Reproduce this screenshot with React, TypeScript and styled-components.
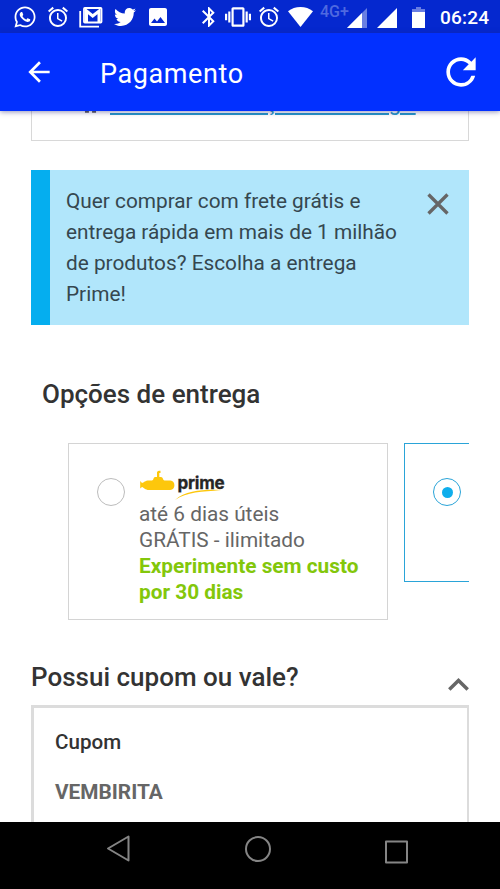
import React from "react";
import styled, { createGlobalStyle } from "styled-components";
import { FaTwitter, FaWhatsapp } from "react-icons/fa";
import { MdAlarm, MdArrowBack, MdBluetooth, MdHome, MdImage, MdRefresh, MdVibration } from "react-icons/md";

const GlobalStyle = createGlobalStyle`
  * { box-sizing: border-box; }
  body { margin: 0; background: #fff; font-family: Roboto, "Liberation Sans", sans-serif; }
  svg { display: block; flex: none; }
  h1, h2, p { margin: 0; font-weight: 400; }
`;

const Phone = styled.div`
  width: 500px;
  height: 889px;
  display: flex;
  flex-direction: column;
  overflow: hidden;
  background: #fff;
`;

const StatusBar = styled.div`
  height: 33px;
  flex: none;
  display: flex;
  align-items: center;
  color: #fff;
  background: #0528cf;
`;

const StatusItem = styled.span<{ $gap: number; $drop?: number }>`
  display: block;
  flex: none;
  margin-left: ${(p) => p.$gap}px;
  margin-top: ${(p) => p.$drop ?? 0}px;
`;

const Network = styled.span`
  align-self: flex-start;
  width: 30px;
  margin-left: 7px;
  margin-top: 4px;
  font-size: 16px;
  font-weight: 500;
  line-height: 16px;
  white-space: nowrap;
  color: #4f69e0;
`;

const Clock = styled.span`
  margin-left: 15px;
  margin-top: 2px;
  font-size: 19px;
  font-weight: 500;
  line-height: 24px;
  letter-spacing: 0.2px;
`;

const AppBar = styled.header`
  height: 78px;
  flex: none;
  display: flex;
  align-items: center;
  padding: 0 17px 0 23px;
  color: #fff;
  background: #0230ff;
  box-shadow: 0 1px 5px rgba(40, 40, 120, 0.5);
  z-index: 1;
`;

const IconButton = styled.button`
  display: block;
  padding: 0;
  border: 0;
  background: none;
  color: inherit;
`;

const PageTitle = styled.h1`
  flex: 1;
  margin-left: 45px;
  padding-top: 3px;
  font-size: 27px;
  line-height: 32px;
  letter-spacing: 0.6px;
`;

const Content = styled.main`
  height: 711px;
  flex: none;
  overflow: hidden;
  padding: 0 31px;
`;

const AddressCard = styled.section`
  height: 70px;
  margin-top: -40px;
  padding: 19px 0 0 49px;
  display: flex;
  align-items: flex-start;
  gap: 10px;
  border: 1px solid #d8d8d8;
  color: #555;
`;

const AddressIcon = styled.span`
  margin-top: 6px;
`;

const AddressLink = styled.a`
  font-size: 22px;
  line-height: 24px;
  letter-spacing: 1.3px;
  white-space: nowrap;
  color: #2596c9;
  text-decoration: underline;
  text-decoration-thickness: 2px;
  text-underline-offset: 3px;
`;

const Banner = styled.section`
  display: flex;
  justify-content: space-between;
  align-items: flex-start;
  height: 155px;
  margin-top: 29px;
  padding: 16px 20px 0 16px;
  border-left: 19px solid #05aeef;
  background: #b1e6fb;
  color: #666;
`;

const BannerText = styled.p`
  width: 345px;
  flex: none;
  font-size: 20.8px;
  line-height: 31px;
  color: #35474f;
`;

const CloseButton = styled(IconButton)`
  margin-top: 7px;
`;

const SectionTitle = styled.h2`
  font-size: 26px;
  font-weight: 500;
  line-height: 32px;
  white-space: nowrap;
  color: #333;
`;

const DeliveryTitle = styled(SectionTitle)`
  margin: 53px 0 0 11px;
`;

const Carousel = styled.div`
  display: flex;
  align-items: flex-start;
  gap: 16px;
  height: 177px;
  margin-top: 33px;
  padding-left: 37px;
  overflow: hidden;
`;

const Option = styled.label<{ $selected?: boolean }>`
  display: flex;
  align-items: flex-start;
  flex: none;
  width: 320px;
  height: ${(p) => (p.$selected ? 139 : 177)}px;
  padding: 26px 10px 0 28px;
  border: ${(p) => (p.$selected ? "1.5px solid #2aa4d8" : "1px solid #d4d4d4")};
`;

const Radio = styled.span<{ $selected?: boolean }>`
  display: grid;
  place-items: center;
  flex: none;
  width: 28px;
  height: 28px;
  margin-top: 8px;
  border: 1px solid ${(p) => (p.$selected ? "#2aa4d8" : "#bcbcbc")};
  border-radius: 50%;

  &::after {
    content: "";
    width: 11px;
    height: 11px;
    border-radius: 50%;
    background: ${(p) => (p.$selected ? "#0faeec" : "transparent")};
  }
`;

const OptionBody = styled.div`
  margin-left: 14px;
  font-size: 20.8px;
  line-height: 26px;
  white-space: nowrap;
  color: #666;
`;

const Promo = styled.p`
  font-weight: 700;
  color: #83c70b;
`;

const CouponHeader = styled.div`
  display: flex;
  justify-content: space-between;
  height: 44px;
  margin-top: 41px;
  color: #666;
`;

const Chevron = styled.span`
  margin-top: 17px;
`;

const CouponCard = styled.section`
  height: 160px;
  padding: 22px 21px;
  border: 3px solid #dcdcdc;
  border-right-width: 2px;
`;

const CouponLabel = styled.p`
  font-size: 20.6px;
  font-weight: 500;
  line-height: 24px;
  color: #333;
`;

const CouponCode = styled.p`
  margin-top: 26px;
  font-size: 20.8px;
  font-weight: 700;
  line-height: 24px;
  color: #666;
`;

const NavBar = styled.nav`
  height: 67px;
  flex: none;
  display: flex;
  align-items: flex-start;
  justify-content: space-between;
  padding: 12px 91px 0 106px;
  color: #858585;
  background: #000;
`;

const NavHome = styled(IconButton)`
  margin-top: -1px;
`;

const NavSquare = styled(IconButton)`
  margin-top: 4px;
`;

const GmailIcon = () => (
  <svg width="24" height="22" viewBox="0 0 24 22" fill="none" stroke="#fff">
    <path d="M1.200 5v15.600H20" strokeWidth="1.800" />
    <rect x="5" y="2" width="17.500" height="14.500" rx="0.800" strokeWidth="1.800" />
    <path d="M7.500 16.500V5l6.200 5L20 5v11.500" strokeWidth="3" />
  </svg>
);

const WifiIcon = () => (
  <svg width="25" height="20" viewBox="0 0 25 20" fill="currentColor">
    <path d="M12.500 20 0 4.200C3.500 1.500 7.800 0 12.500 0s9 1.500 12.500 4.200z" />
  </svg>
);

const SignalIcon = ({ weak = false }: { weak?: boolean }) => (
  <svg width="20" height="20" viewBox="0 0 20 20" fill="currentColor">
    <path d="M0 20 20 0v20z" opacity={weak ? 0.4 : 1} />
    {weak && <path d="M0 20 15 5v15z" />}
  </svg>
);

const BatteryIcon = () => (
  <svg width="13" height="21" viewBox="0 0 13 21" fill="currentColor">
    <path d="M4 0h5v2h4v3H0V2h4z" opacity=".4" />
    <path d="M0 5h13v16H0z" />
  </svg>
);

const LogoText = styled.text`
  font-family: Inter, Roboto, sans-serif;
  font-size: 17px;
  font-weight: 700;
  letter-spacing: -0.2px;
  fill: #252525;
  stroke: #252525;
  stroke-width: 0.3px;
`;

const PrimeLogo = () => (
  <svg width="100" height="31" viewBox="0 0 100 31">
    <g fill="#fdc70c">
      <path d="M10 10.500h3c1.500 0 1.500-3.500 3-3.500h2V2.500C18 1.300 19 .700 21.500 .700v2.300h-1.200V7H22c2 0 2 3.500 3.500 3.500h5.800a4.800 4.800 0 0 1 0 9.500H10C6 20 5 17.500 3 17l-1.800 1.500v-7.500L3 13c2-.5 3-2.500 7-2.500z" />
      <path d="M36 30C48 21.500 63 22 82 20 65 19.500 47 20 36 30z" />
    </g>
    <LogoText x="38.5" y="19">prime</LogoText>
  </svg>
);

export default function App() {
  return (
    <>
      <GlobalStyle />
      <Phone>
        <StatusBar>
          <StatusItem $gap={13}><FaWhatsapp size={24} /></StatusItem>
          <StatusItem $gap={9}><MdAlarm size={24} /></StatusItem>
          <StatusItem $gap={9}><GmailIcon /></StatusItem>
          <StatusItem $gap={11}><FaTwitter size={22} /></StatusItem>
          <StatusItem $gap={10} $drop={1}><MdImage size={24} /></StatusItem>
          <StatusItem $gap={27} $drop={1}><MdBluetooth size={24} /></StatusItem>
          <StatusItem $gap={4}><MdVibration size={26} /></StatusItem>
          <StatusItem $gap={6}><MdAlarm size={24} /></StatusItem>
          <StatusItem $gap={7}><WifiIcon /></StatusItem>
          <Network>4G+</Network>
          <StatusItem $gap={-3} $drop={2}><SignalIcon weak /></StatusItem>
          <StatusItem $gap={10} $drop={2}><SignalIcon /></StatusItem>
          <StatusItem $gap={15} $drop={1}><BatteryIcon /></StatusItem>
          <Clock>06:24</Clock>
        </StatusBar>
        <AppBar>
          <IconButton aria-label="Voltar"><MdArrowBack size={32} /></IconButton>
          <PageTitle>Pagamento</PageTitle>
          <IconButton aria-label="Atualizar"><MdRefresh size={44} /></IconButton>
        </AppBar>
        <Content>
          <AddressCard>
            <AddressIcon><MdHome size={19} /></AddressIcon>
            <AddressLink>Alterar endereço de entrega</AddressLink>
          </AddressCard>
          <Banner>
            <BannerText>Quer comprar com frete grátis e entrega rápida em mais de 1 milhão de produtos? Escolha a entrega Prime!</BannerText>
            <CloseButton aria-label="Fechar">
              <svg width="22" height="22" viewBox="0 0 22 22" stroke="currentColor" strokeWidth="3.300">
                <path d="m1.500 1.500 19 19m0-19-19 19" />
              </svg>
            </CloseButton>
          </Banner>
          <DeliveryTitle>Opções de entrega</DeliveryTitle>
          <Carousel>
            <Option>
              <Radio />
              <OptionBody>
                <PrimeLogo />
                <p>até 6 dias úteis</p>
                <p>GRÁTIS - ilimitado</p>
                <Promo>Experimente sem custo<br />por 30 dias</Promo>
              </OptionBody>
            </Option>
            <Option $selected>
              <Radio $selected />
            </Option>
          </Carousel>
          <CouponHeader>
            <SectionTitle>Possui cupom ou vale?</SectionTitle>
            <Chevron>
              <svg width="21" height="13" viewBox="0 0 21 13" fill="none" stroke="currentColor" strokeWidth="3.500">
                <path d="m1.300 11.500 9.200-9 9.200 9" />
              </svg>
            </Chevron>
          </CouponHeader>
          <CouponCard>
            <CouponLabel>Cupom</CouponLabel>
            <CouponCode>VEMBIRITA</CouponCode>
          </CouponCard>
        </Content>
        <NavBar>
          <IconButton aria-label="Voltar">
            <svg width="25" height="28" viewBox="0 0 25 28" fill="none" stroke="currentColor" strokeWidth="2" strokeLinejoin="round">
              <path d="M2 14.500 22.500 2.500v24z" />
            </svg>
          </IconButton>
          <NavHome aria-label="Início">
            <svg width="28" height="30" viewBox="0 0 28 30" fill="none" stroke="currentColor" strokeWidth="2">
              <circle cx="14" cy="16" r="12" />
            </svg>
          </NavHome>
          <NavSquare aria-label="Recentes">
            <svg width="25" height="26" viewBox="0 0 25 26" fill="none" stroke="currentColor" strokeWidth="2" strokeLinejoin="round">
              <rect x="2" y="3.500" width="21" height="21" />
            </svg>
          </NavSquare>
        </NavBar>
      </Phone>
    </>
  );
}
